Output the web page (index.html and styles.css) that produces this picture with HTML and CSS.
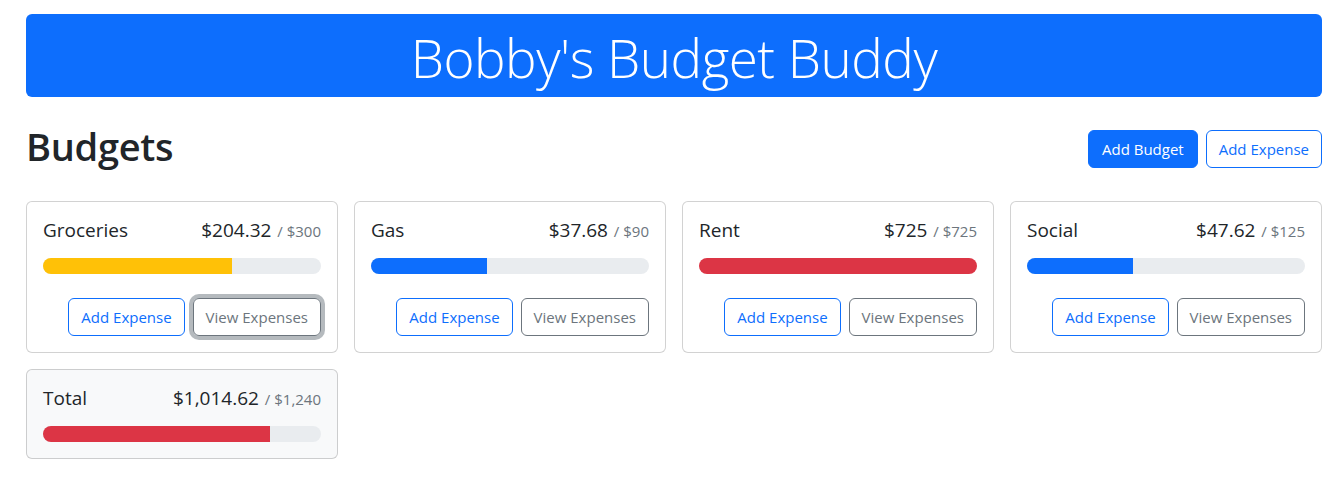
FILE: index.html
```html
<!DOCTYPE html>
<html lang="en">
<head>
<meta charset="utf-8">
<title>Bobby's Budget Buddy</title>
<link rel="stylesheet" href="styles.css">
</head>
<body>
<div class="page">
  <h1 class="banner">Bobby's Budget Buddy</h1>
  <div class="toolbar">
    <h1 class="heading">Budgets</h1>
    <button class="btn btn-primary">Add Budget</button>
    <button class="btn btn-outline-primary">Add Expense</button>
  </div>
  <div class="grid">
    <div class="card">
      <div class="card-title">
        <span class="name">Groceries</span>
        <span class="amount">$204.32<span class="max"> / $300</span></span>
      </div>
      <div class="progress"><div class="bar bar-warning" style="width:68.1%"></div></div>
      <div class="actions">
        <button class="btn btn-outline-primary">Add Expense</button>
        <button class="btn btn-outline-secondary focused">View Expenses</button>
      </div>
    </div>
    <div class="card">
      <div class="card-title">
        <span class="name">Gas</span>
        <span class="amount">$37.68<span class="max"> / $90</span></span>
      </div>
      <div class="progress"><div class="bar bar-primary" style="width:41.87%"></div></div>
      <div class="actions">
        <button class="btn btn-outline-primary">Add Expense</button>
        <button class="btn btn-outline-secondary">View Expenses</button>
      </div>
    </div>
    <div class="card">
      <div class="card-title">
        <span class="name">Rent</span>
        <span class="amount">$725<span class="max"> / $725</span></span>
      </div>
      <div class="progress"><div class="bar bar-danger" style="width:100%"></div></div>
      <div class="actions">
        <button class="btn btn-outline-primary">Add Expense</button>
        <button class="btn btn-outline-secondary">View Expenses</button>
      </div>
    </div>
    <div class="card">
      <div class="card-title">
        <span class="name">Social</span>
        <span class="amount">$47.62<span class="max"> / $125</span></span>
      </div>
      <div class="progress"><div class="bar bar-primary" style="width:38.1%"></div></div>
      <div class="actions">
        <button class="btn btn-outline-primary">Add Expense</button>
        <button class="btn btn-outline-secondary">View Expenses</button>
      </div>
    </div>
    <div class="card card-light">
      <div class="card-title">
        <span class="name">Total</span>
        <span class="amount">$1,014.62<span class="max"> / $1,240</span></span>
      </div>
      <div class="progress"><div class="bar bar-danger" style="width:81.82%"></div></div>
    </div>
  </div>
</div>
</body>
</html>
```

FILE: styles.css
```css
* { box-sizing: border-box; }
html, body { margin: 0; padding: 0; background: #fff; }
body {
  font-family: "Open Sans", "Noto Sans", sans-serif;
  font-size: 16px;
  line-height: 1.5;
  color: #212529;
}
.page {
  width: 1296px;
  margin: 0 0 0 26px;
  padding-top: 14px;
}
.banner {
  margin: 0 0 24px;
  padding: 10px 8px 6px;
  background: #0d6efd;
  color: #fff;
  border-radius: 6px;
  text-align: center;
  font-size: 53px;
  font-weight: 300;
  line-height: 67px;
  letter-spacing: -0.5px;
}
.toolbar {
  display: flex;
  align-items: center;
  gap: 8px;
  margin-bottom: 24px;
}
.heading {
  margin: 0 auto 8px 0;
  padding-top: 2px;
  height: 48px;
  font-size: 38px;
  font-weight: 600;
  line-height: 46px;
  letter-spacing: -0.3px;
}
.btn {
  font-family: inherit;
  font-size: 15px;
  line-height: 24px;
  padding: 6px 12px;
  border-radius: 6px;
  border: 1px solid transparent;
  background: transparent;
  cursor: pointer;
}
.btn-primary { background: #0d6efd; border-color: #0d6efd; color: #fff; padding: 6px 13px; }
.btn-outline-primary { border-color: #0d6efd; color: #0d6efd; }
.btn-outline-secondary { border-color: #6c757d; color: #6c757d; }
.btn-outline-secondary.focused {
  box-shadow: 0 0 0 4px rgba(108, 117, 125, 0.5);
}
.grid {
  display: grid;
  grid-template-columns: repeat(4, 1fr);
  gap: 16px;
  align-items: start;
}
.card {
  border: 1px solid rgba(0, 0, 0, 0.175);
  border-radius: 6px;
  padding: 16px;
  background: #fff;
}
.card-light { background: #f8f9fa; }
.card-title {
  display: flex;
  justify-content: space-between;
  align-items: baseline;
  height: 24px;
  margin-bottom: 16px;
  font-size: 19px;
  line-height: 24px;
}
.amount { line-height: 24px; }
.max {
  font-size: 15px;
  line-height: 1;
  color: #6c757d;
  margin-left: 2px;
}
.progress {
  height: 16px;
  background: #e9ecef;
  border-radius: 50rem;
  overflow: hidden;
  display: flex;
}
.bar { height: 100%; }
.bar-primary { background: #0d6efd; }
.bar-warning { background: #ffc107; }
.bar-danger { background: #dc3545; }
.actions {
  display: flex;
  justify-content: flex-end;
  gap: 8px;
  margin-top: 24px;
}
```
